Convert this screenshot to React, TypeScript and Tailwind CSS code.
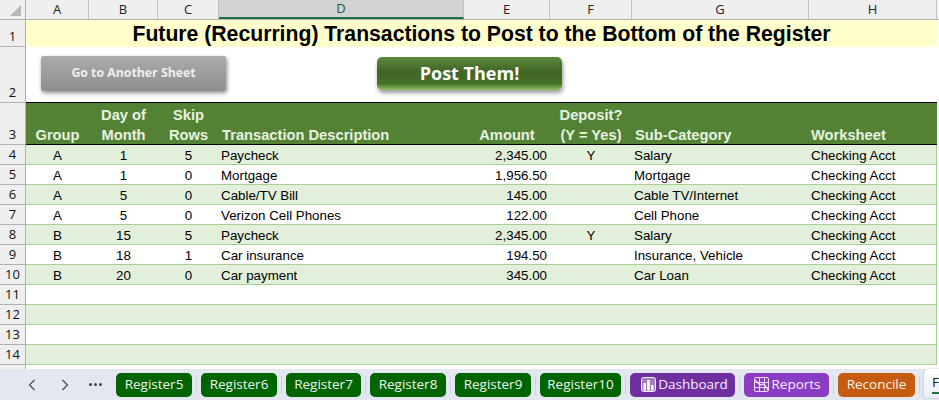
import React from 'react';

const columns = [
  { label: 'A', width: 'w-[63px]' },
  { label: 'B', width: 'w-[69px]' },
  { label: 'C', width: 'w-[61px]' },
  { label: 'D', width: 'w-[245px]', selected: true },
  { label: 'E', width: 'w-[86px]' },
  { label: 'F', width: 'w-[82px]' },
  { label: 'G', width: 'w-[177px]' },
  { label: 'H', width: 'w-[128px]' },
];

const rows = [
  ['A', '1', '5', 'Paycheck', '2,345.00', 'Y', 'Salary', 'Checking Acct'],
  ['A', '1', '0', 'Mortgage', '1,956.50', '', 'Mortgage', 'Checking Acct'],
  ['A', '5', '0', 'Cable/TV Bill', '145.00', '', 'Cable TV/Internet', 'Checking Acct'],
  ['A', '5', '0', 'Verizon Cell Phones', '122.00', '', 'Cell Phone', 'Checking Acct'],
  ['B', '15', '5', 'Paycheck', '2,345.00', 'Y', 'Salary', 'Checking Acct'],
  ['B', '18', '1', 'Car insurance', '194.50', '', 'Insurance, Vehicle', 'Checking Acct'],
  ['B', '20', '0', 'Car payment', '345.00', '', 'Car Loan', 'Checking Acct'],
  ['', '', '', '', '', '', '', ''],
  ['', '', '', '', '', '', '', ''],
  ['', '', '', '', '', '', '', ''],
  ['', '', '', '', '', '', '', ''],
];

const registerTabs = [
  { name: 'Register5', width: 'w-[76px]' },
  { name: 'Register6', width: 'w-[76px]' },
  { name: 'Register7', width: 'w-[75px]' },
  { name: 'Register8', width: 'w-[76px]' },
  { name: 'Register9', width: 'w-[76px]' },
  { name: 'Register10', width: 'w-[81px]' },
];

const Divider = () => <div className="w-px h-[18px] shrink-0 bg-[#cfd3da] mx-1" />;

const RowHeader = ({ n, height }: { n: number; height: string }) => (
  <div className={`w-[26px] shrink-0 ${height} bg-[#efefef] border-r border-b border-[#b1b1b1] flex items-end justify-center font-['Open_Sans',sans-serif] text-[13px] leading-[19px] text-[#111]`}>
    {n}
  </div>
);

const DashboardIcon = () => (
  <svg width="15" height="15" viewBox="0 0 15 15" className="shrink-0">
    <rect x="0.5" y="0.5" width="14" height="14" rx="2" fill="#a57fc4" stroke="#f5eefb" />
    <rect x="2.5" y="6" width="2.5" height="7.5" fill="#ffffff" />
    <rect x="6.2" y="3" width="2.5" height="10.5" fill="#ffffff" />
    <rect x="10" y="8" width="2.5" height="5.5" fill="#ffffff" />
  </svg>
);

const ReportsIcon = () => (
  <svg width="15" height="15" viewBox="0 0 15 15" fill="none" stroke="#eedcf7" strokeWidth="1" className="shrink-0">
    <rect x="0.5" y="0.5" width="14" height="14" rx="1.5" />
    <path d="M0.5 5.5H14.5M0.5 10.5H14.5M5.5 0.5V14.5M10.5 0.5V14.5" />
    <path d="M1 3L6 8L10 7L14 13" strokeWidth="1.4" />
  </svg>
);

const App: React.FC = () => {
  return (
    <div className="w-[939px] h-[400px] overflow-hidden bg-white flex flex-col font-['Liberation_Sans',Arial,sans-serif]">
      {/* column letters */}
      <div className="flex h-[20px] shrink-0 bg-[#efefef] border-b border-[#b1b1b1] font-['Open_Sans',sans-serif] text-[13px] text-[#222]">
        <div className="w-[26px] shrink-0 border-r border-[#b1b1b1] relative">
          <div className="absolute right-[4px] bottom-[3px] w-0 h-0 border-l-[11px] border-l-transparent border-b-[11px] border-b-[#b8b8b8]" />
        </div>
        {columns.map((c) => (
          <div
            key={c.label}
            className={`${c.width} shrink-0 flex items-center justify-center border-r border-[#c4c4c4] ${c.selected ? 'bg-[#d2d2d2] border-b-2 border-b-[#1f7145] text-[#1f5c3a]' : ''}`}
          >
            {c.label}
          </div>
        ))}
      </div>

      {/* row 1, title */}
      <div className="flex h-[27px] shrink-0">
        <RowHeader n={1} height="h-[27px]" />
        <div className="w-[911px] shrink-0 bg-[#ffffcc] flex items-center justify-center text-[21.2px] font-bold text-black">
          Future (Recurring) Transactions to Post to the Bottom of the Register
        </div>
      </div>

      {/* row 2, macro buttons */}
      <div className="flex h-[56px] shrink-0">
        <RowHeader n={2} height="h-[56px]" />
        <div className="w-[911px] shrink-0 border-b border-black flex items-start pl-[15px] pt-[9px]">
          <div className="w-[185px] h-[35px] flex items-center justify-center bg-gradient-to-b from-[#ababab] to-[#8f8f8f] rounded-[2px] shadow-[1px_2px_4px_rgba(0,0,0,0.45)] font-['Open_Sans',sans-serif] font-bold text-[12.3px] text-[#efefef]">
            Go to Another Sheet
          </div>
          <div className="ml-[151px] mt-[1px] w-[185px] h-[33px] flex items-center justify-center bg-[linear-gradient(#5b8a3c_0%,#3f6526_45%,#457029_80%,#8cbf63_100%)] rounded-[5px] shadow-[1px_3px_4px_rgba(0,0,0,0.4)] font-['Open_Sans',sans-serif] font-bold text-[18px] text-white">
            Post Them!
          </div>
        </div>
      </div>

      {/* row 3, table header */}
      <div className="flex h-[42px] shrink-0">
        <RowHeader n={3} height="h-[42px]" />
        <div className="w-[911px] shrink-0 bg-[#548235] border-b border-black flex text-[14.7px] leading-[20px] font-bold text-[#e7f1e0] [&>div]:-mb-px">
          <div className="w-[63px] flex items-end justify-center">Group</div>
          <div className="w-[69px] flex items-end justify-center text-center">Day of<br />Month</div>
          <div className="w-[61px] flex items-end justify-center text-center">Skip<br />Rows</div>
          <div className="w-[245px] flex items-end pl-[3px]">Transaction Description</div>
          <div className="w-[86px] flex items-end justify-center">Amount</div>
          <div className="w-[82px] flex items-end justify-center text-center">Deposit?<br />(Y = Yes)</div>
          <div className="w-[177px] flex items-end pl-[3px]">Sub-Category</div>
          <div className="w-[128px] flex items-end pl-[2px]">Worksheet</div>
        </div>
      </div>

      {/* data rows */}
      {rows.map((r, i) => (
        <div key={i} className="flex h-[20px] shrink-0">
          <RowHeader n={i + 4} height="h-[20px]" />
          <div className={`w-[911px] shrink-0 flex items-center pt-[2px] border-b border-r border-[#a9d08e] text-[13.33px] text-black ${i % 2 === 0 ? 'bg-[#e2efda]' : 'bg-white'}`}>
            <div className="w-[63px] text-center">{r[0]}</div>
            <div className="w-[69px] text-center">{r[1]}</div>
            <div className="w-[61px] text-center">{r[2]}</div>
            <div className="w-[245px] pl-[2px]">{r[3]}</div>
            <div className="w-[86px] text-right pr-[3px]">{r[4]}</div>
            <div className="w-[82px] text-center">{r[5]}</div>
            <div className="w-[177px] pl-[2px]">{r[6]}</div>
            <div className="w-[127px] pl-[2px]">{r[7]}</div>
          </div>
        </div>
      ))}

      {/* remainder of row 15 */}
      <div className="flex h-[4px] shrink-0">
        <div className="w-[26px] shrink-0 bg-[#efefef] border-r border-[#b1b1b1]" />
      </div>

      {/* sheet tabs */}
      <div className="flex-1 bg-[#e3e7ef] flex items-center pl-[24px] font-['Open_Sans',sans-serif] text-[13.5px]">
        <div className="w-[16px] shrink-0 flex justify-center">
          <svg width="8" height="12" viewBox="0 0 8 12" fill="none" stroke="#444" strokeWidth="1.1"><path d="M6.5 1L1.5 6L6.5 11" /></svg>
        </div>
        <div className="w-[16px] shrink-0 ml-[17px] flex justify-center">
          <svg width="8" height="12" viewBox="0 0 8 12" fill="none" stroke="#444" strokeWidth="1.1"><path d="M1.5 1L6.5 6L1.5 11" /></svg>
        </div>
        <div className="ml-[16px] w-[13px] shrink-0 flex justify-between mr-[14px]">
          <span className="w-[3px] h-[3px] rounded-full bg-[#444]" />
          <span className="w-[3px] h-[3px] rounded-full bg-[#444]" />
          <span className="w-[3px] h-[3px] rounded-full bg-[#444]" />
        </div>
        {registerTabs.map((t) => (
          <React.Fragment key={t.name}>
            <div className={`${t.width} h-[24px] shrink-0 rounded-[5px] bg-[#006400] text-[#f0f6f0] flex items-center justify-center`}>
              {t.name}
            </div>
            <Divider />
          </React.Fragment>
        ))}
        <div className="w-[105px] h-[24px] shrink-0 rounded-[5px] bg-[#702f9f] text-[#f5eefb] flex items-center justify-center gap-[2px] pl-[4px]">
          <DashboardIcon />
          Dashboard
        </div>
        <Divider />
        <div className="w-[85px] h-[24px] shrink-0 rounded-[5px] bg-[#8b3cc4] text-[#f5eefb] flex items-center justify-center gap-[2px] pl-[2px]">
          <ReportsIcon />
          Reports
        </div>
        <Divider />
        <div className="w-[77px] h-[24px] shrink-0 rounded-[5px] bg-[#c55a11] text-[#fdf3ea] flex items-center justify-center">
          Reconcile
        </div>
        <Divider />
        <div className="w-[20px] h-[29px] mt-[-3px] shrink-0 rounded-tl-[5px] bg-gradient-to-b from-white to-[#e9edf6] pl-[8px] pt-[3px] text-[#222] overflow-hidden relative shadow-[0_0_2px_rgba(0,0,0,0.3)]">
          F
          <div className="absolute left-[8px] right-0 bottom-[4px] h-[2px] bg-[#1f7145]" />
        </div>
      </div>
    </div>
  );
};

export default App;
